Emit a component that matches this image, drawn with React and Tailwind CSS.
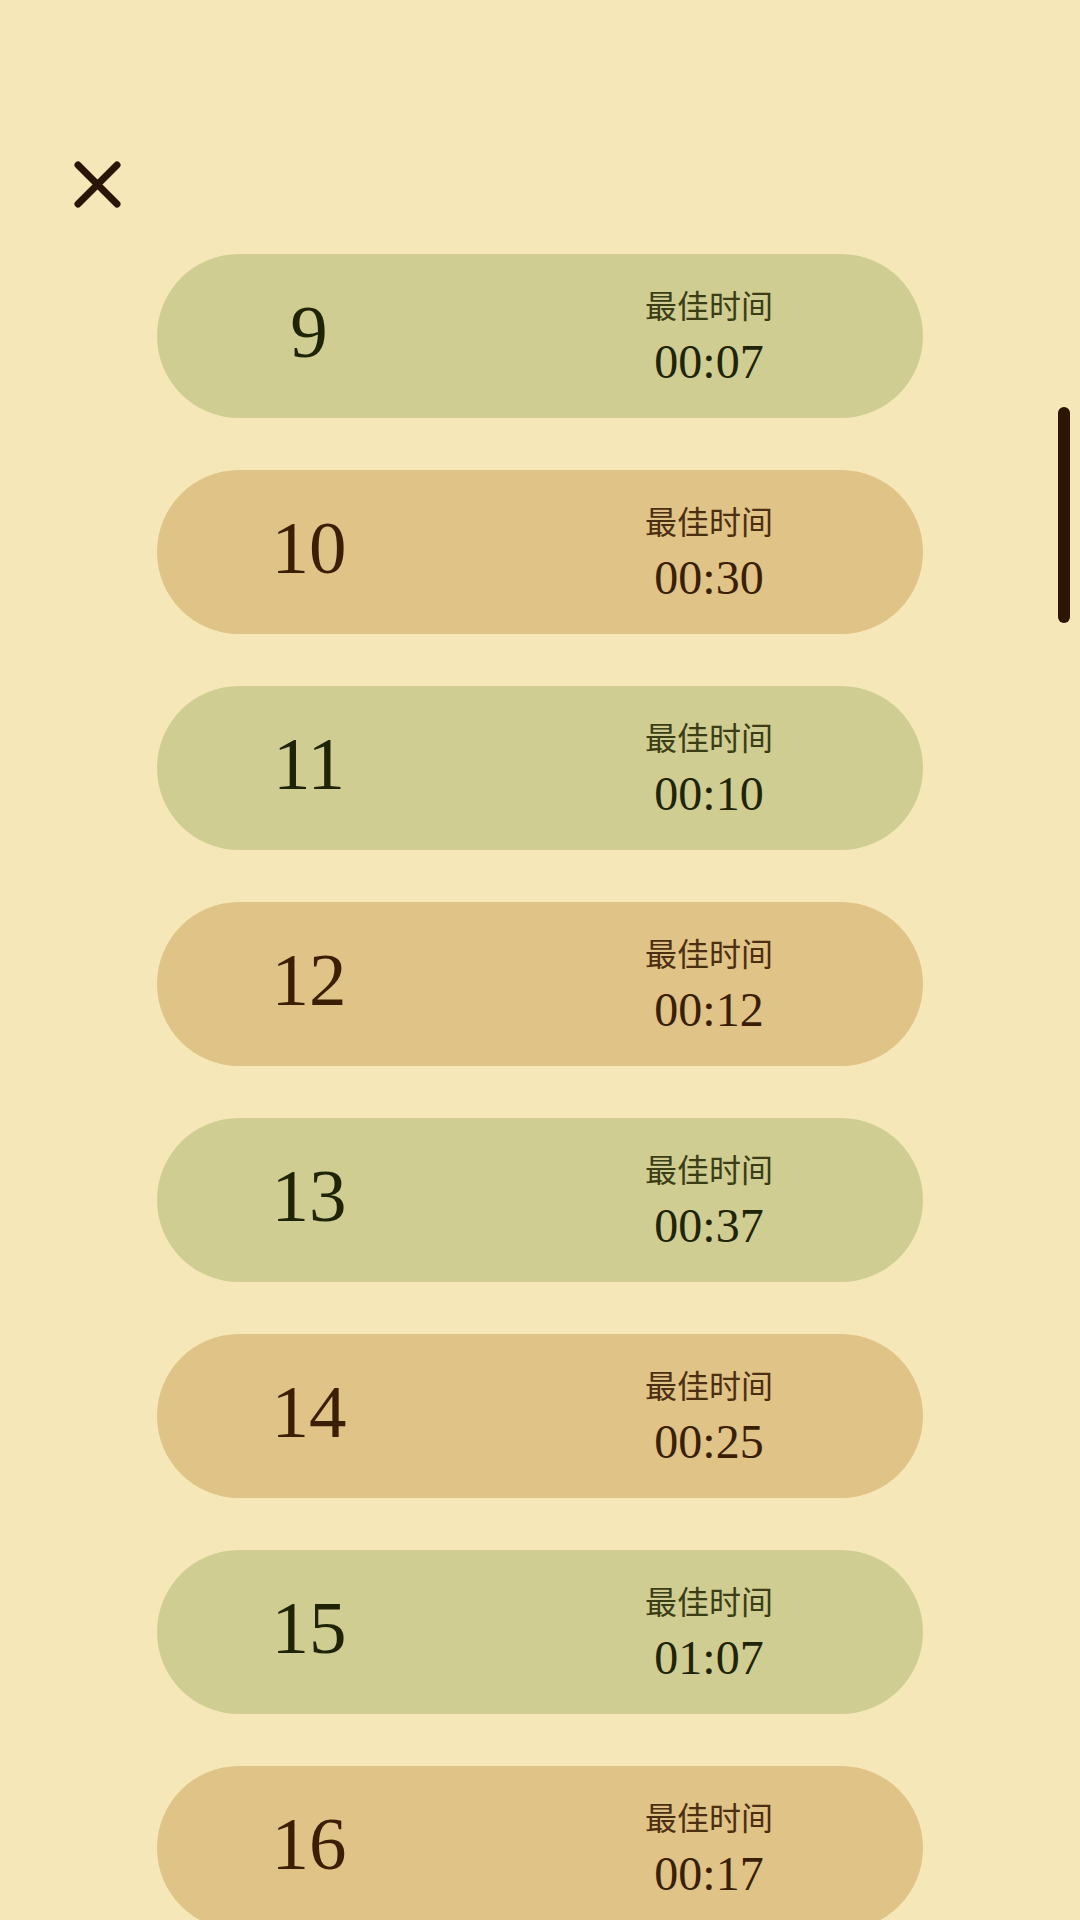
import React from 'react';

const levels = [
  { level: 9, best: '00:07' },
  { level: 10, best: '00:30' },
  { level: 11, best: '00:10' },
  { level: 12, best: '00:12' },
  { level: 13, best: '00:37' },
  { level: 14, best: '00:25' },
  { level: 15, best: '01:07' },
  { level: 16, best: '00:17' },
];

const serif = { fontFamily: '"Liberation Serif", "Times New Roman", serif' };
const cjk = { fontFamily: '"Noto Sans CJK SC", "Noto Sans", sans-serif' };

function CloseIcon() {
  return (
    <svg width="49" height="49" viewBox="0 0 49 49" fill="none">
      <path d="M5 5 L44 44 M44 5 L5 44" stroke="#2a1406" strokeWidth="7" strokeLinecap="round" />
    </svg>
  );
}

function LevelRow({ level, best, idx }) {
  const green = idx % 2 === 0;
  return (
    <div className={'flex items-center w-[766px] h-[164px] rounded-full ' + (green ? 'bg-[#cfcd91]' : 'bg-[#e0c386]')}>
      <div className={'w-[304px] mb-[10px] text-center text-[75px] leading-none ' + (green ? 'text-[#1f2406]' : 'text-[#3a1f05]')} style={serif}>
        {level}
      </div>
      <div className="ml-[120px] w-[256px] flex flex-col items-center">
        <div className={'text-[32px] leading-[40px] ' + (green ? 'text-[#3b3d15]' : 'text-[#4b2f10]')} style={cjk}>
          最佳时间
        </div>
        <div className={'text-[48px] leading-[52px] mt-[12px] ' + (green ? 'text-[#1f2406]' : 'text-[#3a1f05]')} style={serif}>
          {best}
        </div>
      </div>
    </div>
  );
}

export default function App() {
  return (
    <div className="relative w-[1080px] h-[1920px] overflow-hidden bg-[#f5e7b8]">
      <div className="pt-[160px] pl-[73px]">
        <CloseIcon />
      </div>
      <div className="mt-[45px] pl-[157px] flex flex-col gap-[52px]">
        {levels.map((l, i) => (
          <LevelRow key={l.level} level={l.level} best={l.best} idx={i} />
        ))}
      </div>
      {/* scroll thumb */}
      <div className="absolute left-[1058px] top-[407px] w-[12px] h-[216px] rounded-full bg-[#2c1502]" />
    </div>
  );
}
